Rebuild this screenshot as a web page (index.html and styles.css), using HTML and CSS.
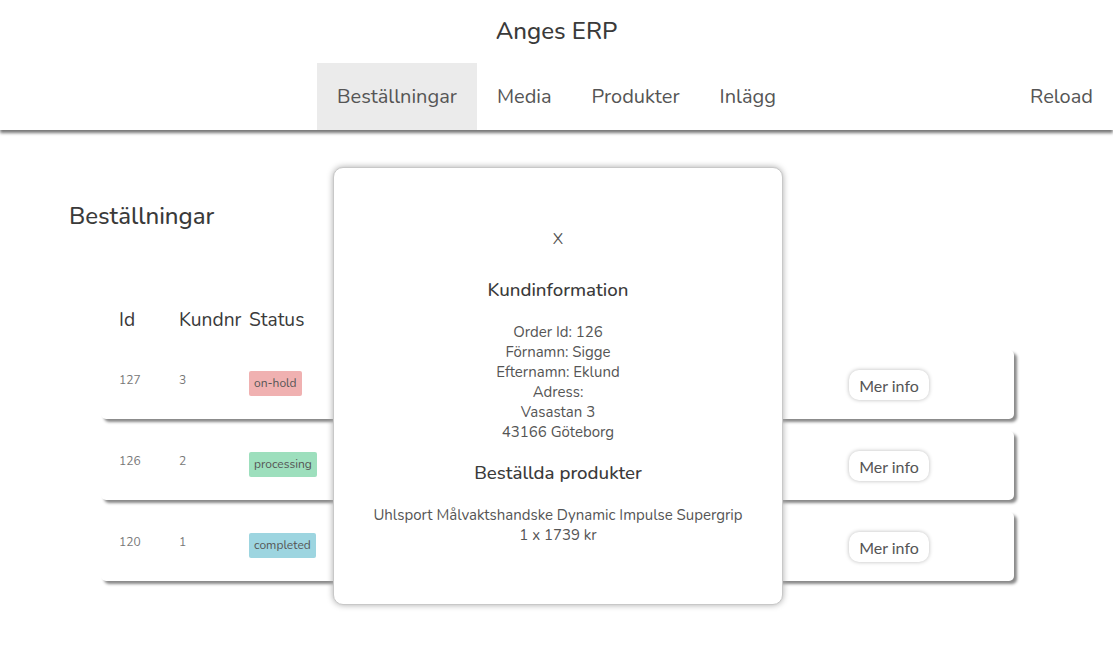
FILE: index.html
```html
<!DOCTYPE html>
<html lang="sv">
<head>
<meta charset="utf-8">
<title>Anges ERP</title>
<link rel="stylesheet" href="styles.css">
</head>
<body>
<header class="site-header">
  <h1 class="brand">Anges ERP</h1>
  <nav class="nav">
    <div class="nav-spacer"></div>
    <ul class="nav-links">
      <li class="nav-item active">Beställningar</li>
      <li class="nav-item">Media</li>
      <li class="nav-item">Produkter</li>
      <li class="nav-item">Inlägg</li>
    </ul>
    <div class="nav-right"><span class="nav-item">Reload</span></div>
  </nav>
</header>

<main class="page">
  <h2 class="page-title">Beställningar</h2>
  <div class="orders">
    <div class="orders-head">
      <span>Id</span><span>Kundnr</span><span>Status</span><span></span>
    </div>
    <div class="order-row">
      <span class="cell">127</span><span class="cell">3</span>
      <span class="cell-status"><span class="badge badge-hold">on-hold</span></span>
      <span class="cell-action"><button class="btn">Mer info</button></span>
    </div>
    <div class="order-row">
      <span class="cell">126</span><span class="cell">2</span>
      <span class="cell-status"><span class="badge badge-processing">processing</span></span>
      <span class="cell-action"><button class="btn">Mer info</button></span>
    </div>
    <div class="order-row">
      <span class="cell">120</span><span class="cell">1</span>
      <span class="cell-status"><span class="badge badge-completed">completed</span></span>
      <span class="cell-action"><button class="btn">Mer info</button></span>
    </div>
  </div>
</main>

<div class="modal">
  <div class="modal-close">X</div>
  <h3 class="modal-heading">Kundinformation</h3>
  <div class="modal-text">
    <div>Order Id: 126</div>
    <div>Förnamn: Sigge</div>
    <div>Efternamn: Eklund</div>
    <div>Adress:</div>
    <div>Vasastan 3</div>
    <div>43166 Göteborg</div>
  </div>
  <h3 class="modal-heading">Beställda produkter</h3>
  <div class="modal-text">
    <div>Uhlsport Målvaktshandske Dynamic Impulse Supergrip</div>
    <div>1 x 1739 kr</div>
  </div>
</div>
</body>
</html>
```

FILE: styles.css
```css
* { box-sizing: border-box; }
body {
  margin: 0;
  font-family: "Nunito", "Lato", "Noto Sans", sans-serif;
  color: #444;
  background: #fff;
}
.site-header {
  background: #fff;
  box-shadow: 0 3px 3px #777;
}
.brand {
  margin: 0;
  height: 63px;
  display: flex;
  align-items: center;
  justify-content: center;
  font-size: 24px;
  font-weight: 500;
  color: #3a3a3a;
  padding-bottom: 1px;
}
.nav {
  display: grid;
  grid-template-columns: 1fr auto 1fr;
  height: 67px;
}
.nav-links {
  display: flex;
  list-style: none;
  margin: 0;
  padding: 0;
}
.nav-item {
  display: block;
  padding: 20px;
  font-size: 20px;
  line-height: 27px;
  color: #555;
}
.nav-item.active { background: #ebebeb; }
.nav-right { display: flex; justify-content: flex-end; }

.page { padding: 0 69px; }
.page-title {
  margin: 0;
  padding-top: 71px;
  font-size: 24px;
  font-weight: 500;
  line-height: 30px;
  color: #3a3a3a;
}
.orders {
  margin: 74px 30px 0 32px;
  width: 913px;
}
.orders-head,
.order-row {
  display: grid;
  grid-template-columns: 60px 70px 1fr 165px;
  padding-left: 18px;
}
.orders-head {
  font-size: 19.2px;
  line-height: 24px;
  color: #3a3a3a;
  padding-top: 3px;
  padding-bottom: 18px;
}
.order-row {
  height: 69px;
  margin-bottom: 12px;
  background: #fff;
  border-radius: 5px;
  box-shadow: 3px 3px 3px #888;
  align-items: start;
}
.cell {
  padding-top: 22px;
  font-size: 12px;
  line-height: 16px;
  color: #777;
}
.cell-status { padding-top: 21px; }
.badge {
  display: inline-block;
  padding: 0 5px;
  height: 25px;
  line-height: 25px;
  font-size: 12px;
  color: #555;
  border-radius: 2px;
}
.badge-hold { background: #f0b1b1; }
.badge-processing { background: #9ddfbd; }
.badge-completed { background: #9dd5e0; }
.cell-action { padding-top: 20px; }
.btn {
  font-family: "Lato", sans-serif;
  font-size: 16px;
  color: #555;
  background: #fff;
  border: none;
  border-radius: 10px;
  width: 80px;
  height: 30px;
  padding: 0;
  box-shadow: 0 0 4px #bbb;
}

.modal {
  position: absolute;
  left: 333px;
  top: 167px;
  width: 450px;
  height: 438px;
  background: #fff;
  border: 1px solid #c8c8c8;
  border-radius: 10px;
  box-shadow: 0 0 6px #aaa;
  text-align: center;
  padding-top: 60px;
}
.modal-close {
  font-size: 16px;
  line-height: 22px;
  color: #555;
}
.modal-heading {
  margin: 28px 0 19px;
  font-size: 18.72px;
  line-height: 25px;
  font-weight: 500;
  color: #3a3a3a;
}
.modal-text {
  font-size: 15px;
  line-height: 20px;
  color: #555;
}
.modal-text + .modal-heading { margin-top: 19px; margin-bottom: 19px; }
```
